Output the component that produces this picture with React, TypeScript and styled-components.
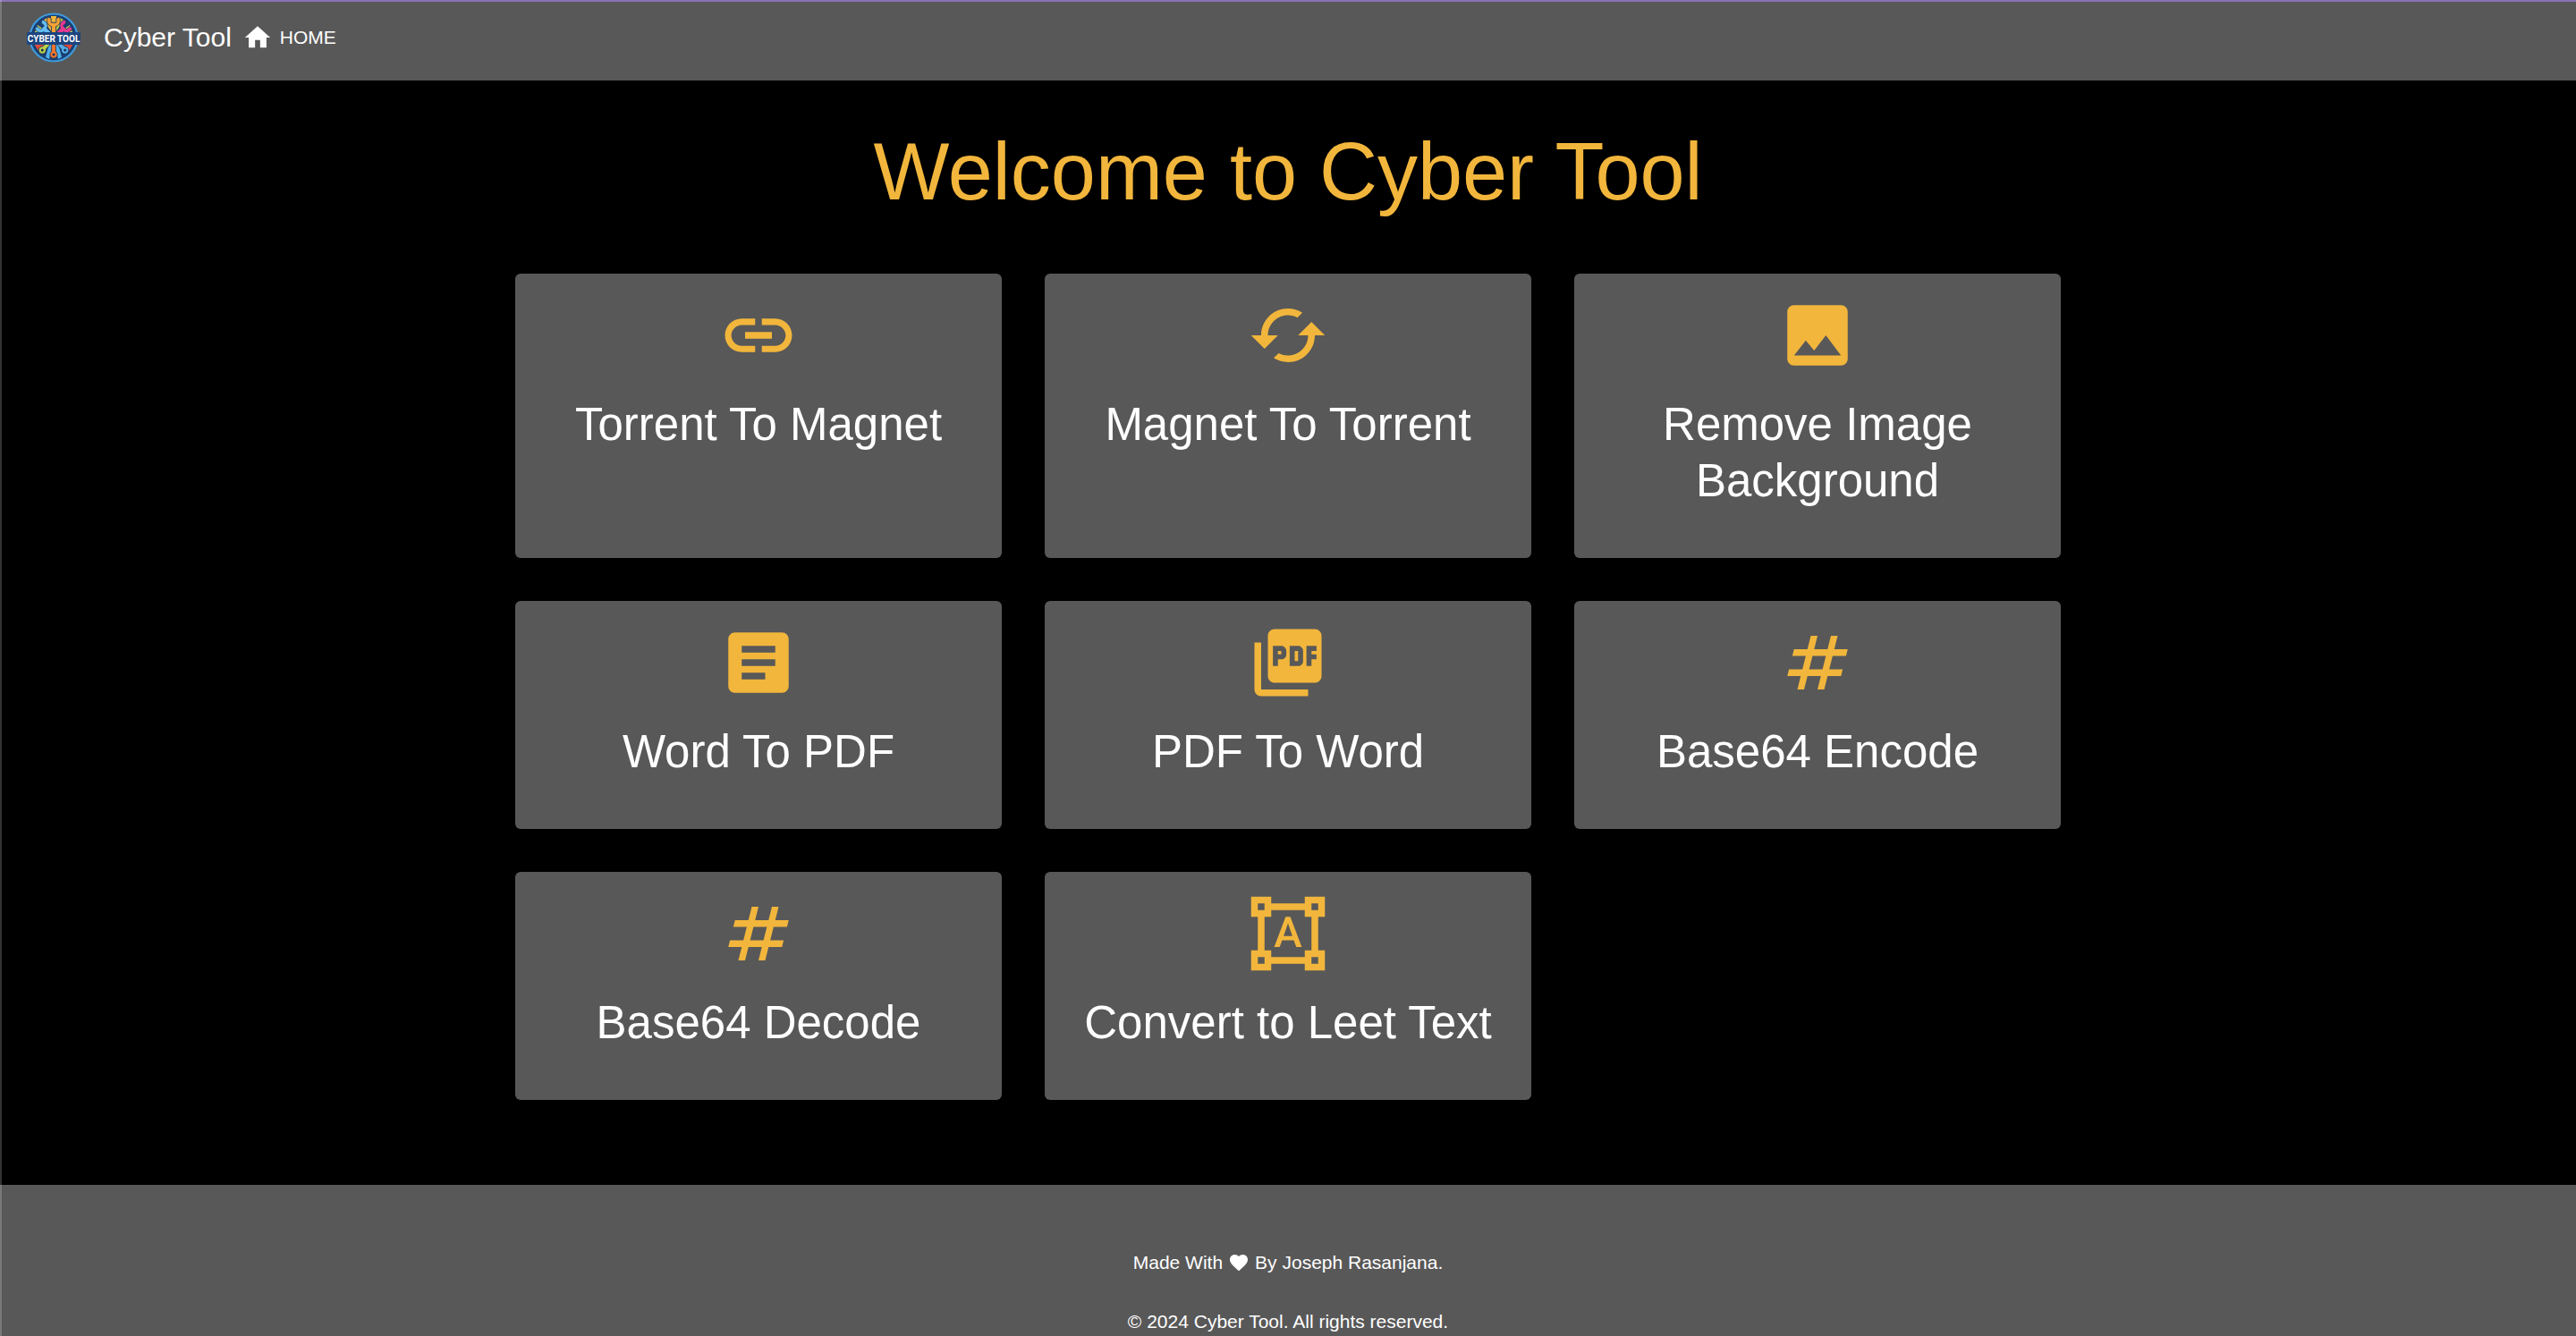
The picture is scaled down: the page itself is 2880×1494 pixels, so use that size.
import React from "react";
import styled, { createGlobalStyle } from "styled-components";
import {
  MdArticle,
  MdCached,
  MdFavorite,
  MdFormatShapes,
  MdHome,
  MdImage,
  MdLink,
  MdNumbers,
  MdPictureAsPdf,
} from "react-icons/md";
import type { IconType } from "react-icons";

const color = {
  page: "#000000",
  surface: "#585858",
  accent: "#f2b63c",
  text: "#ffffff",
  topLine: "#8d6fb5",
};

const GlobalStyle = createGlobalStyle`
  *, *::before, *::after { box-sizing: border-box; }
  body {
    margin: 0;
    background: ${color.page};
    color: ${color.text};
    font-family: "Liberation Sans", Arial, Helvetica, sans-serif;
  }
  h1, h2, p { margin: 0; font-weight: 400; }
  a { color: inherit; text-decoration: none; }
`;

const Page = styled.div`
  position: relative;
  display: flex;
  flex-direction: column;
  min-height: 100vh;

  /* thin highlight along the window's left edge */
  &::before {
    content: "";
    position: absolute;
    inset: 0 auto 0 0;
    width: 2px;
    background: rgba(255, 255, 255, 0.2);
  }
`;

const Header = styled.header`
  display: flex;
  align-items: flex-start;
  height: 90px;
  padding: 12px 30px;
  border-top: 2px solid ${color.topLine};
  background: ${color.surface};
`;

const Brand = styled.a`
  display: flex;
  align-items: center;
  gap: 26px;
  height: 56px;
  font-size: 30px;
  line-height: 36px;
`;

const HomeLink = styled.a`
  display: flex;
  align-items: center;
  gap: 8px;
  height: 56px;
  margin-left: 12px;
  font-size: 21px;
  line-height: 24px;

  svg {
    width: 34px;
    height: 34px;
  }
`;

const Main = styled.main`
  width: 60%;
  margin: 0 auto;
  padding: 50px 0 95px;
`;

const Title = styled.h1`
  margin-bottom: 61px;
  color: ${color.accent};
  font-size: 90px;
  line-height: 105px;
  text-align: center;
`;

const Grid = styled.div`
  display: grid;
  grid-template-columns: repeat(3, 1fr);
  gap: 48px;
`;

const Card = styled.a`
  display: flex;
  flex-direction: column;
  align-items: center;
  gap: 23px;
  padding: 24px 32px 55px;
  border-radius: 6px;
  background: ${color.surface};
  text-align: center;

  svg {
    width: 90px;
    height: 90px;
    color: ${color.accent};
  }
`;

const CardTitle = styled.h2`
  font-size: 51px;
  line-height: 63px;
`;

const Footer = styled.footer`
  display: flex;
  flex: 1;
  flex-direction: column;
  align-items: center;
  gap: 36px;
  padding: 72px 24px 0;
  background: ${color.surface};
  font-size: 21px;
  line-height: 30px;
`;

const Credit = styled.p`
  display: flex;
  align-items: center;
  gap: 6px;

  svg {
    width: 24px;
    height: 24px;
  }
`;

function Wrench({ angle, fill }: { angle: number; fill: string }) {
  return (
    <g transform={`rotate(${angle} 30 28)`}>
      <path
        d="M27.400 26V15.600C22.800 14 21.200 9 24 5l3.200 1.600v4.600h5.600V6.600L36 5c2.800 4 1.200 9-3.400 10.600V26z"
        fill={fill}
        stroke="#16305c"
        strokeWidth="0.8"
      />
    </g>
  );
}

function Spanner({ angle, fill }: { angle: number; fill: string }) {
  return (
    <g transform={`rotate(${angle} 30 28)`}>
      <path d="M27.600 30h4.800v13.500a4.200 4.200 0 1 1-4.800 0z" fill={fill} stroke="#16305c" strokeWidth="0.8" />
      <circle cx="30" cy="47" r="1.500" fill="#16305c" />
    </g>
  );
}

function Logo() {
  return (
    <svg width="60" height="56" viewBox="0 0 60 56" aria-hidden="true">
      <circle cx="30" cy="28" r="26.500" fill="#1a3f73" stroke="#3f9bdc" strokeWidth="2.200" />
      <path d="M9 22 12 14l14 10z" fill="#d3dc52" />
      <path d="M51 22 48 14 34 24z" fill="#d3dc52" />
      <path d="M18.500 8.500l6-3.500 4 18z" fill="#e7b93e" />
      <path d="M41.500 8.500 35.500 5l-4 18z" fill="#b9cf45" />
      <path d="M8 35h13l-8 8z" fill="#e04a3a" />
      <path d="M52 35H39l8 8z" fill="#e04a3a" />
      <path d="M25 35h4l-4 17-4-2z" fill="#4fb0ea" />
      <path d="M35 35h-4l4 17 4-2z" fill="#4fb0ea" />
      <rect x="27" y="4" width="6" height="7" fill="#f0b93b" />
      <Wrench angle={-48} fill="#62bdf0" />
      <Wrench angle={48} fill="#e63a93" />
      <Wrench angle={0} fill="#f7a234" />
      <Spanner angle={42} fill="#b9cf45" />
      <Spanner angle={-42} fill="#52aee4" />
      <Spanner angle={0} fill="#f4772a" />
      <rect x="0" y="22" width="60" height="14" rx="2" fill="#1b4480" />
      <text
        x="30"
        y="33"
        fill="#ffffff"
        fontFamily="Roboto, 'Liberation Sans', sans-serif"
        fontSize="10"
        fontWeight="700"
        textAnchor="middle"
      >
        CYBER TOOL
      </text>
    </svg>
  );
}

const tools: { title: string; href: string; Icon: IconType }[] = [
  { title: "Torrent To Magnet", href: "#torrent-to-magnet", Icon: MdLink },
  { title: "Magnet To Torrent", href: "#magnet-to-torrent", Icon: MdCached },
  { title: "Remove Image Background", href: "#remove-background", Icon: MdImage },
  { title: "Word To PDF", href: "#word-to-pdf", Icon: MdArticle },
  { title: "PDF To Word", href: "#pdf-to-word", Icon: MdPictureAsPdf },
  { title: "Base64 Encode", href: "#base64-encode", Icon: MdNumbers },
  { title: "Base64 Decode", href: "#base64-decode", Icon: MdNumbers },
  { title: "Convert to Leet Text", href: "#leet-text", Icon: MdFormatShapes },
];

export default function App() {
  return (
    <>
      <GlobalStyle />
      <Page>
        <Header>
          <Brand href="#">
            <Logo />
            Cyber Tool
          </Brand>
          <HomeLink href="#home">
            <MdHome aria-hidden="true" />
            HOME
          </HomeLink>
        </Header>
        <Main>
          <Title>Welcome to Cyber Tool</Title>
          <Grid>
            {tools.map(({ title, href, Icon }) => (
              <Card key={title} href={href}>
                <Icon aria-hidden="true" />
                <CardTitle>{title}</CardTitle>
              </Card>
            ))}
          </Grid>
        </Main>
        <Footer>
          <Credit>
            Made With <MdFavorite aria-label="love" /> By Joseph Rasanjana.
          </Credit>
          <p>© 2024 Cyber Tool. All rights reserved.</p>
        </Footer>
      </Page>
    </>
  );
}
